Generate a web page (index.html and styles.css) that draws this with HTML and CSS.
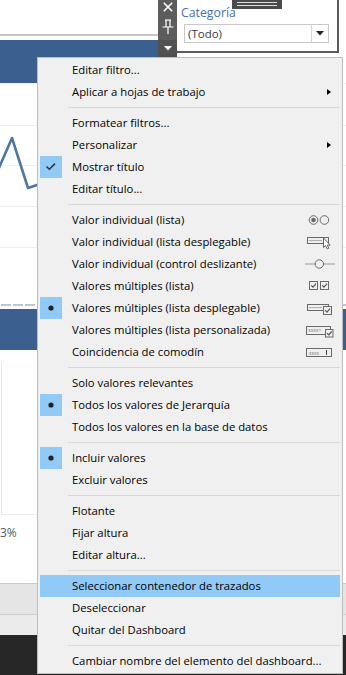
FILE: index.html
```html
<!DOCTYPE html>
<html lang="es">
<head>
    <meta charset="UTF-8">
    <meta name="viewport" content="width=device-width, initial-scale=1.0">
    <title>Dashboard - menú del filtro</title>
    <link rel="stylesheet" href="styles.css">
</head>
<body>
    <div class="dash">
        <div class="head">
            <div class="head-left">
                <div class="blank"></div>
                <div class="rule"></div>
                <div class="gap"></div>
                <div class="band"></div>
            </div>
            <div class="tools">
                <div class="tool t-close">
                    <svg width="10" height="10" viewBox="0 0 10 10"><path d="M0.8 0.8 L9.2 9.2 M9.2 0.8 L0.8 9.2" stroke="#fff" stroke-width="1.6"/></svg>
                </div>
                <div class="tool t-pin">
                    <svg width="12" height="16" viewBox="0 0 12 16"><path d="M3 1.2 H9 M4 1.2 V7.5 M8 1.2 V7.5 M0.5 8 H11.5 M6 8 V15" stroke="#fff" stroke-width="1.2" fill="none"/></svg>
                </div>
                <div class="tool t-menu">
                    <svg width="8" height="5" viewBox="0 0 8 5"><path d="M0 0 H8 L4 4.5 Z" fill="#fff"/></svg>
                </div>
            </div>
            <div class="filter">
                <div class="grip"><span></span><span></span></div>
                <div class="title">Categoría</div>
                <div class="select">
                    <div class="value">(Todo)</div>
                    <div class="drop">
                        <svg width="8" height="5" viewBox="0 0 8 5"><path d="M0 0 H8 L4 4.5 Z" fill="#222"/></svg>
                    </div>
                </div>
            </div>
        </div>

        <div class="chart">
            <svg width="346" height="226" viewBox="0 0 346 226">
                <path d="M0 0.5 H346 M0 42.5 H346 M0 82.5 H346 M0 123.5 H346 M0 164.5 H346" stroke="#eeeeee" stroke-width="1"/>
                <path d="M1 222 H346" stroke="#bcc5d2" stroke-width="2" stroke-dasharray="10 2"/>
                <polyline points="-2,87 12,55 28,105 37,102 60,96" fill="none" stroke="#4e76a6" stroke-width="2.6" stroke-linejoin="round"/>
            </svg>
        </div>
        <div class="bar"></div>
        <div class="table">
            <div class="cell"></div>
            <div class="pct">3%</div>
        </div>
        <div class="tabs"></div>
        <div class="tabs2"></div>
        <div class="foot"></div>
    </div>

    <!-- menú contextual del filtro -->
    <div class="menu">
        <div class="item"><span class="mark"></span><span class="label">Editar filtro...</span></div>
        <div class="item"><span class="mark"></span><span class="label">Aplicar a hojas de trabajo</span><span class="arrow"></span></div>
        <div class="sep"><span></span></div>
        <div class="item"><span class="mark"></span><span class="label">Formatear filtros...</span></div>
        <div class="item"><span class="mark"></span><span class="label">Personalizar</span><span class="arrow"></span></div>
        <div class="item"><span class="mark on">
            <svg width="22" height="22" viewBox="0 0 22 22"><path d="M6.5 10.5 L9.3 13.2 L15 7.6" fill="none" stroke="#333" stroke-width="1.5"/></svg>
        </span><span class="label">Mostrar título</span></div>
        <div class="item"><span class="mark"></span><span class="label">Editar título...</span></div>
        <div class="sep"><span></span></div>
        <div class="item"><span class="mark"></span><span class="label">Valor individual (lista)</span>
            <span class="icon"><svg width="30" height="16" viewBox="0 0 30 16">
                <circle cx="8.5" cy="8" r="4.3" fill="none" stroke="#6a6a6a"/>
                <circle cx="8.5" cy="8" r="2.3" fill="#6a6a6a"/>
                <circle cx="19.4" cy="8" r="4.3" fill="none" stroke="#6a6a6a"/>
            </svg></span></div>
        <div class="item"><span class="mark"></span><span class="label">Valor individual (lista desplegable)</span>
            <span class="icon"><svg width="30" height="16" viewBox="0 0 30 16">
                <rect x="2.5" y="3.5" width="21" height="6" fill="none" stroke="#6a6a6a"/>
                <path d="M3.5 6.5 H17" stroke="#b0b0b0"/>
                <path d="M18.5 4 V13.5 L20.6 11.6 L22.2 14.9 L23.8 14.2 L22.3 11.1 L25.2 11.1 Z" fill="#fff" stroke="#555" stroke-width="0.9" stroke-linejoin="round"/>
            </svg></span></div>
        <div class="item"><span class="mark"></span><span class="label">Valor individual (control deslizante)</span>
            <span class="icon"><svg width="30" height="16" viewBox="0 0 30 16">
                <path d="M0 8 H30" stroke="#c4c4c4" stroke-width="2"/>
                <circle cx="14.3" cy="8" r="4.2" fill="#f0f0f0" stroke="#6a6a6a"/>
            </svg></span></div>
        <div class="item"><span class="mark"></span><span class="label">Valores múltiples (lista)</span>
            <span class="icon"><svg width="30" height="16" viewBox="0 0 30 16">
                <rect x="4.5" y="3.5" width="8" height="8" fill="none" stroke="#6a6a6a"/>
                <rect x="15.5" y="3.5" width="8" height="8" fill="none" stroke="#6a6a6a"/>
                <path d="M6.2 7.3 L8 9.2 L11 5.6 M17.2 7.3 L19 9.2 L22 5.6" fill="none" stroke="#555" stroke-width="1.2"/>
            </svg></span></div>
        <div class="item"><span class="mark on">
            <svg width="22" height="22" viewBox="0 0 22 22"><circle cx="11" cy="11" r="2.6" fill="#222"/></svg>
        </span><span class="label">Valores múltiples (lista desplegable)</span>
            <span class="icon"><svg width="30" height="16" viewBox="0 0 30 16">
                <rect x="2.5" y="4.5" width="21" height="6" fill="none" stroke="#6a6a6a"/>
                <path d="M3.5 7.5 H17" stroke="#b0b0b0"/>
                <rect x="18.5" y="6.5" width="8" height="8" fill="#f0f0f0" stroke="#6a6a6a"/>
                <path d="M20.2 10.3 L22 12.2 L25 8.6" fill="none" stroke="#555" stroke-width="1.2"/>
            </svg></span></div>
        <div class="item"><span class="mark"></span><span class="label">Valores múltiples (lista personalizada)</span>
            <span class="icon"><svg width="30" height="16" viewBox="0 0 30 16">
                <rect x="1.5" y="4.5" width="24" height="8" fill="none" stroke="#6a6a6a"/>
                <text x="3.2" y="10.4" font-family="Liberation Sans, sans-serif" font-size="5" fill="#777">xxxx&gt;</text>
                <rect x="20.5" y="7.5" width="7.5" height="7.5" fill="#f0f0f0" stroke="#6a6a6a"/>
                <path d="M22 11.1 L23.8 12.9 L26.7 9.5" fill="none" stroke="#555" stroke-width="1.2"/>
            </svg></span></div>
        <div class="item"><span class="mark"></span><span class="label">Coincidencia de comodín</span>
            <span class="icon"><svg width="30" height="16" viewBox="0 0 30 16">
                <rect x="1.5" y="4.5" width="25" height="8" fill="none" stroke="#6a6a6a"/>
                <text x="4" y="10.6" font-family="Liberation Sans, sans-serif" font-size="5" fill="#777">xxxx</text>
                <path d="M21.5 6 V11" stroke="#444"/>
            </svg></span></div>
        <div class="sep"><span></span></div>
        <div class="item"><span class="mark"></span><span class="label">Solo valores relevantes</span></div>
        <div class="item"><span class="mark on">
            <svg width="22" height="22" viewBox="0 0 22 22"><circle cx="11" cy="11" r="2.6" fill="#222"/></svg>
        </span><span class="label">Todos los valores de Jerarquía</span></div>
        <div class="item"><span class="mark"></span><span class="label">Todos los valores en la base de datos</span></div>
        <div class="sep"><span></span></div>
        <div class="item"><span class="mark on">
            <svg width="22" height="22" viewBox="0 0 22 22"><circle cx="11" cy="11" r="2.6" fill="#222"/></svg>
        </span><span class="label">Incluir valores</span></div>
        <div class="item"><span class="mark"></span><span class="label">Excluir valores</span></div>
        <div class="sep"><span></span></div>
        <div class="item"><span class="mark"></span><span class="label">Flotante</span></div>
        <div class="item"><span class="mark"></span><span class="label">Fijar altura</span></div>
        <div class="item"><span class="mark"></span><span class="label">Editar altura...</span></div>
        <div class="sep"><span></span></div>
        <div class="item hl"><span class="mark"></span><span class="label">Seleccionar contenedor de trazados</span></div>
        <div class="item"><span class="mark"></span><span class="label">Deseleccionar</span></div>
        <div class="item"><span class="mark"></span><span class="label">Quitar del Dashboard</span></div>
        <div class="sep"><span></span></div>
        <div class="item"><span class="mark"></span><span class="label">Cambiar nombre del elemento del dashboard...</span></div>
    </div>
</body>
</html>
```

FILE: styles.css
```css
body {
    margin: 0;
    width: 346px;
    height: 675px;
    overflow: hidden;
    background: #fff;
    font-family: "Open Sans", "Noto Sans", sans-serif;
    position: relative;
}

/* dashboard de fondo */
.dash {
    display: flex;
    flex-direction: column;
}

.head {
    display: flex;
    align-items: flex-start;
    height: 83px;
}

.head-left {
    width: 158px;
    display: flex;
    flex-direction: column;
}

.blank { height: 34px; }
.rule { height: 2px; background-color: #c6c6c6; }
.gap { height: 4px; }
.band { height: 43px; background-color: #3b6090; }

.tools {
    width: 19px;
    height: 57px;
    background-color: #5c5c5c;
    display: flex;
    flex-direction: column;
}

.tool {
    display: flex;
    align-items: center;
    justify-content: center;
}

.t-close { height: 14px; }
.t-pin { height: 26px; }
.t-menu { height: 17px; background-color: #515151; }

.filter {
    width: 156px;
    height: 47px;
    padding: 4px 0 0 4px;
    background-color: #fff;
    border-right: 2px solid #5b5b5b;
    border-bottom: 2px solid #5b5b5b;
    position: relative;
}

.grip {
    position: absolute;
    top: 0;
    left: 55px;
    width: 50px;
    height: 9px;
    background-color: #4b4b4b;
    display: flex;
    flex-direction: column;
    align-items: center;
    padding-top: 2px;
    gap: 2px;
    box-sizing: border-box;
}

.grip span {
    width: 40px;
    height: 1px;
    background-color: #e0e0e0;
}

.title {
    height: 17px;
    line-height: 17px;
    font-size: 12.3px;
    color: #4472b4;
}

.select {
    margin: 3px 0 0 3px;
    width: 143px;
    height: 17px;
    border: 1px solid #c8c8c8;
    display: flex;
}

.select .value {
    flex: 1;
    padding-left: 3px;
    line-height: 17px;
    font-size: 11.5px;
    color: #3a3a3a;
}

.select .drop {
    width: 16px;
    border-left: 1px solid #d6d6d6;
    display: flex;
    align-items: center;
    justify-content: center;
}

.chart { height: 226px; }
.chart svg { display: block; }

.bar { height: 41px; background-color: #3b6090; }

.table {
    height: 221px;
    padding-top: 12px;
}

.cell {
    margin-left: 1px;
    width: 40px;
    height: 152px;
    border-left: 1px solid #e6e6e6;
    border-bottom: 1px solid #ececec;
}

.pct {
    margin-top: 9px;
    line-height: 18px;
    font-size: 12px;
    color: #5a5a5a;
}

.tabs {
    height: 30px;
    background-color: #e5e5e5;
    border-top: 1px solid #c9c9c9;
}

.tabs2 {
    height: 20px;
    background-color: #ebebeb;
    border-top: 1px solid #d0d0d0;
}

.foot { height: 40px; background-color: #272727; }

/* menú */
.menu {
    position: absolute;
    left: 37px;
    top: 57px;
    width: 300px;
    padding: 1px 2px;
    background-color: #f0f0f0;
    border: 1px solid #bdbdbd;
    font-size: 11.3px;
    color: #000;
}

.item {
    display: flex;
    align-items: center;
    height: 22px;
    white-space: nowrap;
}

.item.hl { background-color: #91c9f7; }

.mark {
    width: 22px;
    height: 22px;
    flex: none;
    display: flex;
}

.mark.on { background-color: #91c9f7; }

.label {
    margin-left: 10px;
    line-height: 22px;
}

.arrow {
    margin-left: auto;
    margin-right: 9px;
    width: 0;
    height: 0;
    border-left: 4px solid #000;
    border-top: 3.5px solid transparent;
    border-bottom: 3.5px solid transparent;
}

.icon {
    margin-left: auto;
    margin-right: 5px;
    display: flex;
}

.sep {
    height: 9px;
    display: flex;
    align-items: center;
    padding-left: 28px;
}

.sep span {
    flex: 1;
    height: 1px;
    background-color: #d7d7d7;
}
```
